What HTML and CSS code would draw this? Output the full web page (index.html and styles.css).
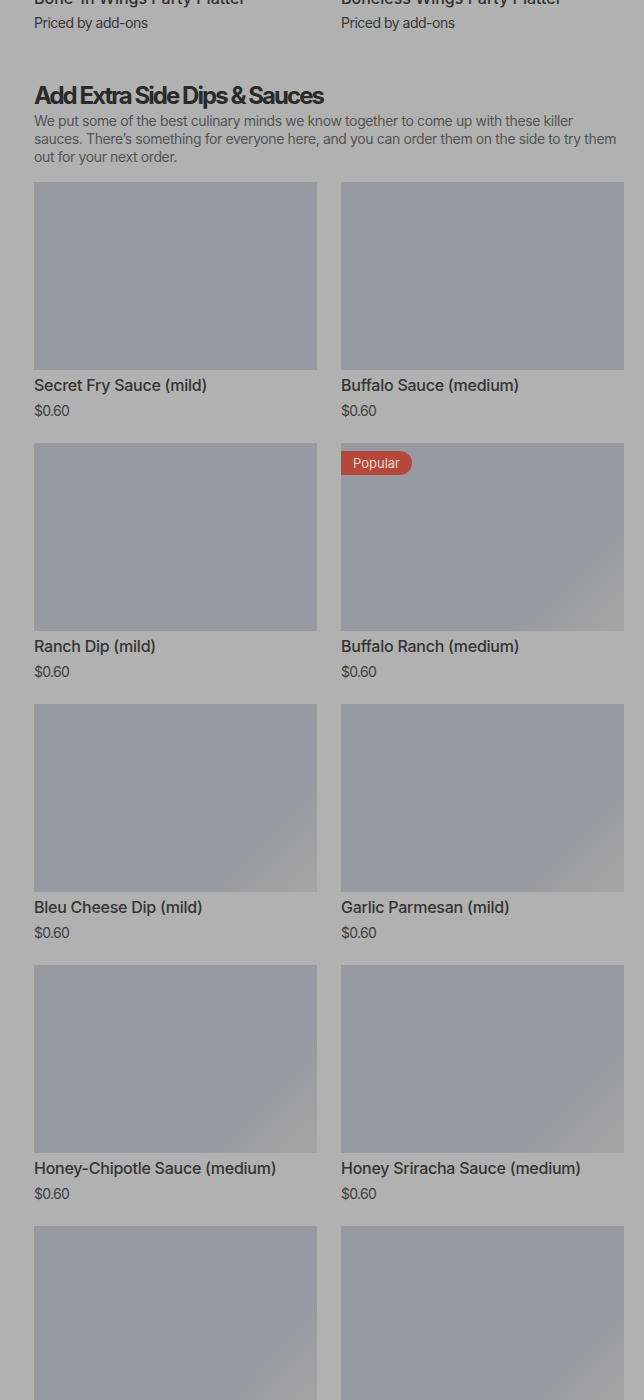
FILE: index.html
```html
<!DOCTYPE html>
<html>
<head>
<meta charset="utf-8">
<link rel="stylesheet" href="styles.css">
</head>
<body>
<div class="page">
  <div class="grid prev">
    <div class="card">
      <div class="title">Bone-In Wings Party Platter</div>
      <div class="price">Priced by add-ons</div>
    </div>
    <div class="card">
      <div class="title">Boneless Wings Party Platter</div>
      <div class="price">Priced by add-ons</div>
    </div>
  </div>

  <section class="section">
    <h2 class="heading">Add Extra Side Dips &amp; Sauces</h2>
    <p class="desc">We put some of the best culinary minds we know together to come up with these killer sauces. There’s something for everyone here, and you can order them on the side to try them out for your next order.</p>
    <div class="grid items">
      <div class="card">
        <div class="thumb plain"></div>
        <div class="title">Secret Fry Sauce (mild)</div>
        <div class="price">$0.60</div>
      </div>
      <div class="card">
        <div class="thumb plain"></div>
        <div class="title">Buffalo Sauce (medium)</div>
        <div class="price">$0.60</div>
      </div>
      <div class="card">
        <div class="thumb plain"></div>
        <div class="title">Ranch Dip (mild)</div>
        <div class="price">$0.60</div>
      </div>
      <div class="card">
        <div class="thumb"><span class="badge">Popular</span></div>
        <div class="title">Buffalo Ranch (medium)</div>
        <div class="price">$0.60</div>
      </div>
      <div class="card">
        <div class="thumb"></div>
        <div class="title">Bleu Cheese Dip (mild)</div>
        <div class="price">$0.60</div>
      </div>
      <div class="card">
        <div class="thumb"></div>
        <div class="title">Garlic Parmesan (mild)</div>
        <div class="price">$0.60</div>
      </div>
      <div class="card">
        <div class="thumb"></div>
        <div class="title">Honey-Chipotle Sauce (medium)</div>
        <div class="price">$0.60</div>
      </div>
      <div class="card">
        <div class="thumb"></div>
        <div class="title">Honey Sriracha Sauce (medium)</div>
        <div class="price">$0.60</div>
      </div>
      <div class="card">
        <div class="thumb"></div>
        <div class="title">Cajun Dip</div>
        <div class="price">$0.60</div>
      </div>
      <div class="card">
        <div class="thumb"></div>
        <div class="title">Honey Mustard</div>
        <div class="price">$0.60</div>
      </div>
    </div>
  </section>
</div>
</body>
</html>
```

FILE: styles.css
```css
html, body {
  margin: 0;
  padding: 0;
  background: #b1b1b1;
}
body {
  font-family: Inter, "Noto Sans", "Liberation Sans", sans-serif;
  color: #2e2e2e;
  overflow: hidden;
}
.page {
  padding: 0 20px 0 34px;
  margin-top: -14px;
}
.grid {
  display: grid;
  grid-template-columns: 283px 283px;
  column-gap: 24px;
}
.prev .title {
  font-size: 16px;
  line-height: 24px;
  font-weight: 500;
  color: #2f2f2f;
}
.prev .price {
  margin-top: 3px;
  font-size: 14px;
  line-height: 20px;
  color: #383838;
  letter-spacing: -0.5px;
}
.section {
  margin-top: 48px;
}
.heading {
  margin: 0;
  font-size: 24px;
  line-height: 30px;
  font-weight: 700;
  letter-spacing: -1.95px;
  color: #2a2a2a;
}
.desc {
  margin: 1px 0 0 0;
  font-size: 14px;
  line-height: 18px;
  color: #545454;
  letter-spacing: -0.38px;
  max-width: 587px;
}
.items {
  margin-top: 16px;
  row-gap: 23px;
}
.card {
  display: flex;
  flex-direction: column;
}
.thumb {
  position: relative;
  height: 188px;
  background: linear-gradient(135deg, #979aa2 0%, #979aa2 76%, #a0a0a2 88%, #a5a5a5 100%);
  box-shadow: inset 1px 1px 0 #9a9a9a;
}
.thumb.plain {
  background: #979aa2;
}
.badge {
  position: absolute;
  top: 8px;
  left: 0;
  height: 24px;
  line-height: 24px;
  padding: 0 12px;
  background: #b5483a;
  color: #ead6d2;
  font-size: 13px;
  border-radius: 0 12px 12px 0;
}
.items .title {
  margin-top: 4px;
  font-size: 16px;
  line-height: 22px;
  font-weight: 500;
  color: #343434;
  letter-spacing: -0.25px;
}
.items .price {
  margin-top: 6px;
  font-size: 14px;
  line-height: 18px;
  color: #404040;
  letter-spacing: -0.7px;
}
```
